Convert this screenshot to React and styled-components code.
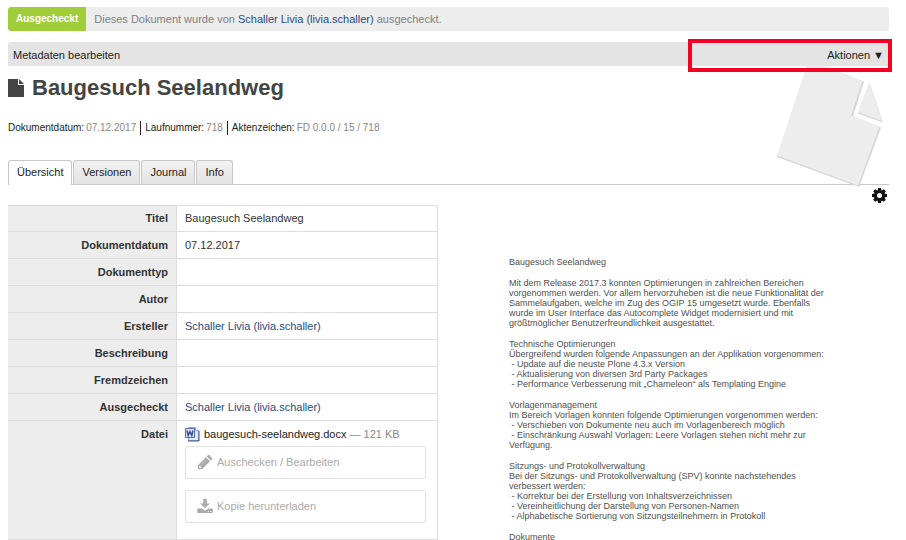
import React from "react";
import styled, { createGlobalStyle, css } from "styled-components";

const Global = createGlobalStyle`
  * { box-sizing: border-box; }
  body {
    margin: 0;
    background: #fff;
    color: #333;
    font: 11px/16px "Liberation Sans", Arial, sans-serif;
  }
  button { font: inherit; color: inherit; }
`;

const Page = styled.div`
  height: 100vh;
  overflow: hidden;
  padding: 7px 17px 0 8px;
`;

const Notice = styled.div`
  display: flex;
  align-items: stretch;
  line-height: 24px;
  border-radius: 3px;
  overflow: hidden;
  background: #ededed;
  color: #808080;
`;

const NoticeLabel = styled.strong`
  padding: 0 8px;
  background: #a0ce3a;
  color: #fff;
  font-size: 10px;
`;

const NoticeText = styled.p`
  margin: 0;
  padding: 0 8px;
`;

const UserLink = styled.a`
  color: #2a4b84;
  text-decoration: none;
`;

const Header = styled.header`
  position: relative;
  margin-top: 11px;
`;

const ActionBar = styled.div`
  display: flex;
  justify-content: space-between;
  align-items: center;
  height: 24px;
  padding: 2px 5px 0;
  border-radius: 3px 3px 0 0;
  background: #e4e4e4;
`;

const EditLink = styled.a`
  color: #222;
  text-decoration: none;
`;

const MenuButton = styled.button`
  border: 0;
  padding: 0;
  background: none;
  color: #222;
`;

const Highlight = styled.div`
  position: absolute;
  top: -3px;
  right: -3px;
  width: 204px;
  height: 33px;
  border: 4px solid #f40024;
  pointer-events: none;
`;

const Watermark = styled.svg`
  position: absolute;
  top: 24px;
  right: 6px;
  width: 107px;
  height: 121px;
  pointer-events: none;
`;

const TitleRow = styled.div`
  display: flex;
  align-items: center;
  gap: 8px;
  height: 44px;
`;

const Title = styled.h1`
  margin: 0;
  color: #444;
  font-size: 22px;
  line-height: 28px;
`;

const MetaList = styled.dl`
  display: flex;
  margin: 11px 0 0;
  font-size: 10px;
  line-height: 14px;
`;

const MetaItem = styled.div`
  display: flex;
  gap: 2px;
  padding-right: 4px;
  & + & { padding-left: 4px; border-left: 1px solid #222; }
  dt { color: #222; }
  dd { margin: 0; color: #888; }
`;

const Tabs = styled.nav`
  display: flex;
  gap: 1px;
  height: 25px;
  margin-top: 25px;
  border-bottom: 1px solid #c8c8c8;
`;

const Tab = styled.a`
  height: 24px;
  padding: 0 8px;
  border: 1px solid #c8c8c8;
  border-bottom: 0;
  border-radius: 3px 3px 0 0;
  background: linear-gradient(#f2f2f2, #e2e2e2);
  color: #222;
  line-height: 23px;
  text-decoration: none;
  ${(p) => p.$active && css`
    height: 25px;
    background: #fff;
  `}
`;

const Columns = styled.main`
  display: grid;
  grid-template-columns: 1fr 1fr;
  gap: 21px;
  align-items: start;
`;

const Details = styled.table`
  width: 100%;
  margin-top: 20px;
  border-spacing: 0;
`;

const Row = styled.tr`
  th, td {
    height: 27px;
    padding: 5px 8px;
    border-bottom: 1px solid #ddd;
    border-right: 1px solid #ddd;
    vertical-align: top;
    text-align: left;
  }
  th {
    width: 169px;
    background: #ededed;
    text-align: right;
  }
  &:first-child th, &:first-child td {
    padding-top: 4px;
    border-top: 1px solid #ddd;
  }
  &:first-child td { border-top-right-radius: 3px; }
`;

const FileLine = styled.div`
  display: flex;
  align-items: center;
  gap: 3px;
  color: #888;
  a { color: #222; text-decoration: none; }
`;

const FileActions = styled.div`
  display: grid;
  gap: 11px;
  padding: 4px 3px 11px 0;
`;

const FileButton = styled.button`
  display: flex;
  align-items: center;
  gap: 4px;
  height: 33px;
  padding: 0 11px 2px;
  border: 1px solid #e2e2e2;
  border-radius: 2px;
  background: #fff;
  color: #aaa;
`;

const Side = styled.section`
  display: flex;
  flex-direction: column;
`;

const GearButton = styled.button`
  align-self: flex-end;
  display: flex;
  margin: 3px 2px 0 0;
  padding: 0;
  border: 0;
  background: none;
`;

const Preview = styled.article`
  padding: 54px 0 0 50px;
  color: #505050;
  font-size: 9px;
  line-height: 10px;
`;

const Block = styled.p`
  margin: 0 0 11px;
  white-space: pre;
`;

const PageIcon = () => (
  <svg width="16" height="18" viewBox="0 0 16 18" fill="#444" aria-hidden="true">
    <path d="M0 0h10v6h6v12H0zM11 0l5 5h-5z" />
  </svg>
);

const WordIcon = () => (
  <svg width="16" height="15" viewBox="0 0 16 15" aria-hidden="true">
    <path d="M3.500.500h7l3 3v10h-10z" fill="#dfe9fb" stroke="#8ea4d4" />
    <path d="M3 14h11V4" fill="none" stroke="#46598c" />
    <path d="M10.500.500v3h3" fill="#fff" stroke="#8ea4d4" />
    <path d="M.500 1.500h9v9h-9z" fill="#dde4f7" stroke="#5a70b8" />
    <path d="M2 3.500l1.200 5L5 4.500l1.800 4L8 3.500" fill="none" stroke="#3448a2" strokeWidth="1.400" />
  </svg>
);

const PencilIcon = () => (
  <svg width="16" height="16" viewBox="0 0 16 16" fill="#aaa" aria-hidden="true">
    <path d="M1 11.300L9 3.300l4 4-8 8H1zM2.200 12.200v1.900h1.900l.6-.6-1.900-1.900z" fillRule="evenodd" />
    <path d="M9.800 2.500l1-1c.6-.6 1.200-.6 1.800 0l2.200 2.200c.6.6.6 1.200 0 1.800l-1 1z" />
    <path d="M4.200 10.700l5-5" stroke="#ddd" strokeWidth=".6" />
  </svg>
);

const DownloadIcon = () => (
  <svg width="16" height="16" viewBox="0 0 16 16" fill="#aaa" aria-hidden="true">
    <path d="M6.200 1h3.600v4.500h3L8 10 3.200 5.500h3z" />
    <path d="M1 10.500h3.600L8 12.800l3.400-2.300H15c.5 0 .8.300.8.800v2.900c0 .5-.3.800-.8.800H1c-.5 0-.8-.3-.8-.8v-2.900c0-.5.3-.8.8-.8z" />
    <path d="M10.800 13h1v1h-1zM13.200 13h1v1h-1z" fill="#fff" />
  </svg>
);

const GearIcon = () => (
  <svg width="15" height="15" viewBox="-8 -8 16 16" aria-hidden="true">
    <circle r="4.300" fill="none" stroke="#111" strokeWidth="3.200" />
    {[0, 45, 90, 135, 180, 225, 270, 315].map((a) => (
      <path key={a} d="M-2.100-5L-1.500-8h3L2.100-5z" fill="#111" transform={`rotate(${a})`} />
    ))}
  </svg>
);

const user = "Schaller Livia (livia.schaller)";

const rows = [
  ["Titel", "Baugesuch Seelandweg"],
  ["Dokumentdatum", "07.12.2017"],
  ["Dokumenttyp", ""],
  ["Autor", ""],
  ["Ersteller", <UserLink href="#user">{user}</UserLink>],
  ["Beschreibung", ""],
  ["Fremdzeichen", ""],
  ["Ausgecheckt", <UserLink href="#user">{user}</UserLink>],
];

const meta = [
  ["Dokumentdatum:", "07.12.2017"],
  ["Laufnummer:", "718"],
  ["Aktenzeichen:", "FD 0.0.0 / 15 / 718"],
];

const blocks = [
  "Baugesuch Seelandweg",
  `Mit dem Release 2017.3 konnten Optimierungen in zahlreichen Bereichen
vorgenommen werden. Vor allem hervorzuheben ist die neue Funktionalität der
Sammelaufgaben, welche im Zug des OGIP 15 umgesetzt wurde. Ebenfalls
wurde im User Interface das Autocomplete Widget modernisiert und mit
größtmöglicher Benutzerfreundlichkeit ausgestattet.`,
  `Technische Optimierungen
Übergreifend wurden folgende Anpassungen an der Applikation vorgenommen:
 - Update auf die neuste Plone 4.3.x Version
 - Aktualisierung von diversen 3rd Party Packages
 - Performance Verbesserung mit „Chameleon“ als Templating Engine`,
  `Vorlagenmanagement
Im Bereich Vorlagen konnten folgende Optimierungen vorgenommen werden:
 - Verschieben von Dokumente neu auch im Vorlagenbereich möglich
 - Einschränkung Auswahl Vorlagen: Leere Vorlagen stehen nicht mehr zur
Verfügung.`,
  `Sitzungs- und Protokollverwaltung
Bei der Sitzungs- und Protokollverwaltung (SPV) konnte nachstehendes
verbessert werden:
 - Korrektur bei der Erstellung von Inhaltsverzeichnissen
 - Vereinheitlichung der Darstellung von Personen-Namen
 - Alphabetische Sortierung von Sitzungsteilnehmern in Protokoll`,
  "Dokumente",
];

export default function App() {
  return (
    <Page>
      <Global />
      <Notice>
        <NoticeLabel>Ausgecheckt</NoticeLabel>
        <NoticeText>
          Dieses Dokument wurde von <UserLink href="#user">{user}</UserLink> ausgecheckt.
        </NoticeText>
      </Notice>
      <Header>
        <ActionBar>
          <EditLink href="#edit">Metadaten bearbeiten</EditLink>
          <MenuButton type="button">Aktionen ▼</MenuButton>
        </ActionBar>
        <TitleRow>
          <PageIcon />
          <Title>Baugesuch Seelandweg</Title>
        </TitleRow>
        <MetaList>
          {meta.map(([k, v]) => (
            <MetaItem key={k}><dt>{k}</dt><dd>{v}</dd></MetaItem>
          ))}
        </MetaList>
        <Tabs>
          {["Übersicht", "Versionen", "Journal", "Info"].map((t, i) => (
            <Tab key={t} href={`#${t}`} $active={i === 0}>{t}</Tab>
          ))}
        </Tabs>
        <Watermark viewBox="0 0 107 121" aria-hidden="true">
          <g fill="#d6d6d6">
            <path d="M31 0H47L88 15.500 77 50 105 61.500 83 121 1 91z" />
            <path d="M93.500 17L107 56.500 82 47.500z" />
          </g>
          <g fill="#ededed">
            <path d="M31 0H46L86.500 15 75 49.500 103.500 60.500 82 119.500 1 89.500z" />
            <path d="M93 16.500L106 55 82 46z" />
          </g>
        </Watermark>
        <Highlight />
      </Header>
      <Columns>
        <Details>
          <tbody>
            {rows.map(([k, v]) => (
              <Row key={k}><th scope="row">{k}</th><td>{v}</td></Row>
            ))}
            <Row>
              <th scope="row">Datei</th>
              <td>
                <FileLine>
                  <WordIcon />
                  <a href="#file">baugesuch-seelandweg.docx</a>
                  <span>— 121 KB</span>
                </FileLine>
                <FileActions>
                  <FileButton type="button"><PencilIcon />Auschecken / Bearbeiten</FileButton>
                  <FileButton type="button"><DownloadIcon />Kopie herunterladen</FileButton>
                </FileActions>
              </td>
            </Row>
          </tbody>
        </Details>
        <Side>
          <GearButton type="button" aria-label="Einstellungen"><GearIcon /></GearButton>
          <Preview>
            {blocks.map((b) => <Block key={b}>{b}</Block>)}
          </Preview>
        </Side>
      </Columns>
    </Page>
  );
}
